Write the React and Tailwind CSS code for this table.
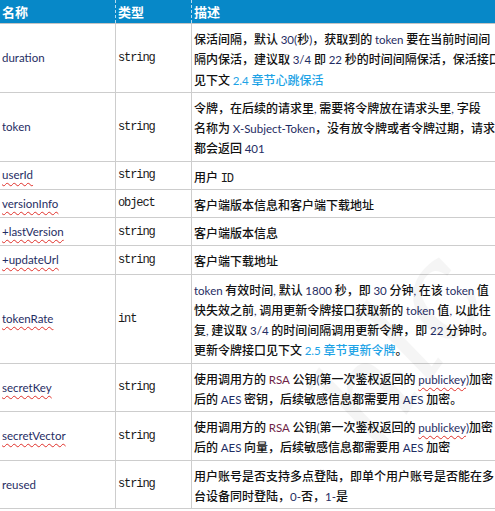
import React from 'react'

const cjk = "font-['Noto_Sans_CJK_SC','Noto_Sans',sans-serif]"
const lat = "font-['Lato','Liberation_Sans',sans-serif] font-normal text-[11.5px] text-[#1f2d63] leading-none"
const mono = "font-['Liberation_Mono','DejaVu_Sans_Mono',monospace] font-normal text-[12px] tracking-[-1.1px] text-[#1a1a1a] leading-none"
const link = "font-['Lato','Liberation_Sans',sans-serif] font-normal text-[11.5px] text-[#1ea3e6] leading-none"
const wavy = 'underline decoration-wavy decoration-[#e0302a] decoration-1 underline-offset-[3px]'

// wraps ascii runs in the latin font, like word does
function Rich({ text }) {
  const parts = text.split(/([\x21-\x7E][\x20-\x7E]*[\x21-\x7E]|[\x21-\x7E])/)
  return parts.map((p, i) =>
    /[\x21-\x7E]/.test(p) ? <span key={i} className={lat}>{p}</span> : <React.Fragment key={i}>{p}</React.Fragment>
  )
}

const Link = ({ children }) => (
  <span className={link}>
    {children.split(/(\d[\d.]*)/).map((p, i) =>
      /\d/.test(p) ? p : <span key={i} className={`${cjk} font-medium text-[12px]`}>{p}</span>
    )}
  </span>
)

const rsa = <span className="font-['Lato',sans-serif] font-normal text-[11.5px] text-[#6e1f47] leading-none">RSA</span>
const pub = <span className={`${lat} ${wavy}`}>publickey</span>

const rows = [
  {
    name: 'duration',
    type: 'string',
    lines: [
      '保活间隔，默认 30(秒)，获取到的 token 要在当前时间间',
      '隔内保活，建议取 3/4 即 22 秒的时间间隔保活，保活接口',
      <>见下文 <Link>2.4 章节心跳保活</Link></>,
    ],
  },
  {
    name: 'token',
    type: 'string',
    lines: [
      '令牌，在后续的请求里, 需要将令牌放在请求头里, 字段',
      '名称为 X-Subject-Token，没有放令牌或者令牌过期，请求',
      '都会返回 401',
    ],
  },
  { name: 'userId', wavy: true, type: 'string', lines: [<>用户 <span className={mono}>ID</span></>] },
  { name: 'versionInfo', wavy: true, type: 'object', lines: ['客户端版本信息和客户端下载地址'] },
  { name: '+lastVersion', wavy: true, type: 'string', lines: ['客户端版本信息'] },
  { name: '+updateUrl', wavy: true, type: 'string', lines: ['客户端下载地址'] },
  {
    name: 'tokenRate',
    wavy: true,
    type: 'int',
    lines: [
      'token 有效时间, 默认 1800 秒，即 30 分钟, 在该 token 值',
      '快失效之前, 调用更新令牌接口获取新的 token 值, 以此往',
      '复, 建议取 3/4 的时间间隔调用更新令牌，即 22 分钟时。',
      <>更新令牌接口见下文 <Link>2.5 章节更新令牌</Link>。</>,
    ],
  },
  {
    name: 'secretKey',
    wavy: true,
    type: 'string',
    lines: [
      <>使用调用方的 {rsa} 公钥<Rich text="(" />第一次鉴权返回的 {pub}<Rich text=")" />加密</>,
      '后的 AES 密钥，后续敏感信息都需要用 AES 加密。',
    ],
  },
  {
    name: 'secretVector',
    wavy: true,
    type: 'string',
    lines: [
      <>使用调用方的 {rsa} 公钥<Rich text="(" />第一次鉴权返回的 {pub}<Rich text=")" />加密</>,
      '后的 AES 向量，后续敏感信息都需要用 AES 加密',
    ],
  },
  {
    name: 'reused',
    type: 'string',
    lines: ['用户账号是否支持多点登陆，即单个用户账号是否能在多', '台设备同时登陆，0-否，1-是'],
  },
]

export default function App() {
  return (
    <div className={`relative w-[495px] h-[511px] overflow-hidden bg-white ${cjk} text-[12px] text-[#111]`}>
      <div className="w-[620px]">
        <div className="grid grid-cols-[116px_76px_1fr] h-[24px] bg-[#0788c8] border-b border-[#c4c4c4] text-white font-bold text-[13px] leading-[23px]">
          <div className="pl-[2px] border-r border-dashed border-white/70">名称</div>
          <div className="pl-[2px] border-r border-dashed border-white/70">类型</div>
          <div className="pl-[2px]">描述</div>
        </div>
        {rows.map(r => (
          <div key={r.name} className="grid grid-cols-[116px_76px_1fr] border-b border-[#cdcdcd]">
            <div className="flex items-center pl-[2px] border-r border-[#cdcdcd]">
              <span className={`${lat} text-[#1d2b55] ${r.wavy ? wavy : ''}`}>{r.name}</span>
            </div>
            <div className="flex items-center pl-[2px] border-r border-[#cdcdcd]">
              <span className={mono}>{r.type}</span>
            </div>
            <div className="pl-[2px] pt-[5px] pb-[2px] font-medium">
              {r.lines.map((l, i) => (
                <div key={i} className="h-[20.25px] leading-[20px] whitespace-nowrap">
                  {typeof l === 'string' ? <Rich text={l} /> : l}
                </div>
              ))}
            </div>
          </div>
        ))}
      </div>
      <div className="pointer-events-none absolute left-[300px] top-[250px] -rotate-[55deg] font-['DejaVu_Serif',serif] italic text-[130px] text-[#000] opacity-[0.035] select-none">
        hlc
      </div>
    </div>
  )
}
